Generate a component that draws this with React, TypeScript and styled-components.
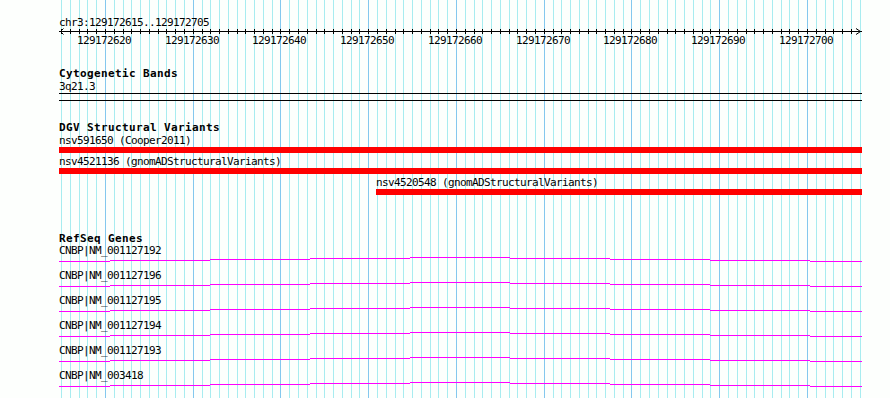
import * as React from 'react';
import styled, { createGlobalStyle } from 'styled-components';

// view: chr3:129172615..129172705
const START = 129172615;
const END = 129172705;
const PANEL_LEFT = 59;
const PANEL_WIDTH = 803;
const BASE_X = 61.1; // page x of the first base
const BP = 8.775; // pixels per base

const baseX = (i: number) => Math.round(BASE_X + i * BP);
const bases = Array.from({ length: END - START + 2 }, (_, i) => i);

const GlobalStyle = createGlobalStyle`
  html, body {
    margin: 0;
    padding: 0;
    background: #fdfffd;
  }
`;

const Page = styled.div`
  position: relative;
  width: 890px;
  height: 398px;
  overflow: hidden;
  background: #fdfffd;
  font-family: 'DejaVu Sans Mono', 'Liberation Mono', monospace;
  font-size: 11px;
  color: #000;
`;

const GridLayer = styled.svg`
  position: absolute;
  left: 0;
  top: 0;
  z-index: 0;
`;

const Panel = styled.div`
  position: relative;
  z-index: 1;
  margin-left: ${PANEL_LEFT}px;
  width: ${PANEL_WIDTH}px;
  display: flex;
  flex-direction: column;
`;

const Location = styled.div`
  margin-top: 16px;
  height: 12px;
  line-height: 13px;
  letter-spacing: -0.62px;
  white-space: nowrap;
`;

const RulerLine = styled.svg`
  display: block;
  overflow: visible;
`;

const TickStrip = styled.div`
  position: relative;
  height: 13px;
`;

const TickLabel = styled.span`
  position: absolute;
  top: 0;
  line-height: 13px;
  letter-spacing: -0.62px;
  white-space: nowrap;
`;

const TrackTitle = styled.div<{ $gap: number }>`
  margin-top: ${(p) => p.$gap}px;
  height: 13px;
  line-height: 13px;
  font-weight: bold;
  letter-spacing: 0.38px;
  white-space: nowrap;
`;

const BandName = styled.div`
  height: 13px;
  line-height: 13px;
  letter-spacing: -0.62px;
`;

const BandBox = styled.div`
  height: 6px;
  border-top: 1px solid #000;
  border-bottom: 1px solid #000;
`;

const FeatureList = styled.div`
  display: flex;
  flex-direction: column;
  gap: 3px;
  margin-top: 1px;
`;

const Feature = styled.div<{ $start: number }>`
  margin-left: ${(p) => p.$start}px;
  display: flex;
  flex-direction: column;
`;

const FeatureLabel = styled.div`
  height: 12px;
  line-height: 12px;
  letter-spacing: -0.62px;
  white-space: nowrap;
`;

const Bar = styled.div`
  height: 6px;
  background: #ff0000;
`;

const GeneRow = styled.div`
  display: flex;
  flex-direction: column;
`;

const GeneLine = styled.svg`
  display: block;
`;

const variants = [
  { name: 'nsv591650 (Cooper2011)', start: 0 },
  { name: 'nsv4521136 (gnomADStructuralVariants)', start: 0 },
  { name: 'nsv4520548 (gnomADStructuralVariants)', start: 317 },
];

const transcripts = [
  'CNBP|NM_001127192',
  'CNBP|NM_001127196',
  'CNBP|NM_001127195',
  'CNBP|NM_001127194',
  'CNBP|NM_001127193',
  'CNBP|NM_003418',
];

// gene line is drawn in 100px tiles, each one pixel off the next
const tileEdges = [0, 51, 151, 251, 351, 451, 551, 651, 751, PANEL_WIDTH];

const Ruler: React.FC = () => {
  const mid = 3.5;
  return (
    <>
      <RulerLine width={PANEL_WIDTH} height={6} shapeRendering="crispEdges">
        <line x1={0} y1={mid} x2={PANEL_WIDTH} y2={mid} stroke="#000" />
        {bases.slice(0, END - START + 1).map((i) => {
          const x = baseX(i) - PANEL_LEFT + 0.5;
          return <line key={i} x1={x} y1={1} x2={x} y2={6} stroke="#000" />;
        })}
        <polyline
          points={`4.5,0.5 1.5,${mid} 4.5,6.5`}
          fill="none"
          stroke="#000"
          shapeRendering="auto"
        />
        <polyline
          points={`${PANEL_WIDTH - 6},0.5 ${PANEL_WIDTH - 1.5},${mid} ${PANEL_WIDTH - 6},6.5`}
          fill="none"
          stroke="#000"
          shapeRendering="auto"
        />
      </RulerLine>
      <TickStrip>
        {bases
          .filter((i) => (START + i) % 10 === 0)
          .map((i) => (
            <TickLabel key={i} style={{ left: baseX(i) - PANEL_LEFT - 28 }}>
              {START + i}
            </TickLabel>
          ))}
      </TickStrip>
    </>
  );
};

export default function App() {
  return (
    <Page>
      <GlobalStyle />
      <GridLayer width={890} height={398} shapeRendering="crispEdges">
        {bases.map((i) => {
          const x = baseX(i) + 0.5;
          const major = (START + i) % 10 === 0;
          return (
            <line
              key={i}
              x1={x}
              y1={0}
              x2={x}
              y2={398}
              stroke={major ? '#84c8ee' : '#a8ecf0'}
            />
          );
        })}
      </GridLayer>

      <Panel>
        <Location>
          chr3:{START}..{END}
        </Location>
        <Ruler />

        {/* Cytogenetic Bands */}
        <TrackTitle $gap={20}>Cytogenetic Bands</TrackTitle>
        <BandName>3q21.3</BandName>
        <BandBox />

        {/* DGV Structural Variants */}
        <TrackTitle $gap={20}>DGV Structural Variants</TrackTitle>
        <FeatureList>
          {variants.map((v) => (
            <Feature key={v.name} $start={v.start}>
              <FeatureLabel>{v.name}</FeatureLabel>
              <Bar />
            </Feature>
          ))}
        </FeatureList>

        {/* RefSeq Genes */}
        <TrackTitle $gap={37}>RefSeq Genes</TrackTitle>
        {transcripts.map((t) => (
          <GeneRow key={t}>
            <FeatureLabel>{t}</FeatureLabel>
            <GeneLine width={PANEL_WIDTH} height={13} shapeRendering="crispEdges">
              {tileEdges.slice(0, -1).map((x, i) => {
                const y = Math.abs(i - 4) + 0.5;
                return (
                  <line
                    key={i}
                    x1={x}
                    y1={y}
                    x2={tileEdges[i + 1]}
                    y2={y}
                    stroke="#ff00ff"
                  />
                );
              })}
            </GeneLine>
          </GeneRow>
        ))}
      </Panel>
    </Page>
  );
}
